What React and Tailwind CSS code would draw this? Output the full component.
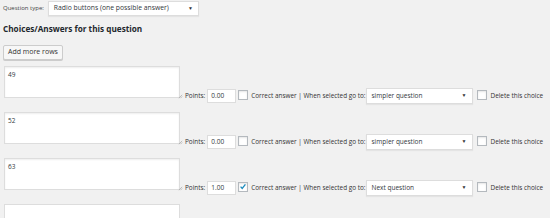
const choices = [
  { text: "49", points: "0.00", correct: false, goto: "simpler question" },
  { text: "52", points: "0.00", correct: false, goto: "simpler question" },
  { text: "63", points: "1.00", correct: true, goto: "Next question" },
];

function Check({ checked }) {
  return (
    <span className="inline-flex w-[10px] h-[10px] shrink-0 items-center justify-center bg-white border border-[#b4b9be] shadow-[inset_0_1px_2px_rgba(0,0,0,0.1)]">
      {checked && (
        <svg viewBox="0 0 10 10" className="w-[9px] h-[9px]">
          <path d="M2 5.2 L4 7.4 L8 2.4" fill="none" stroke="#1e8cbe" strokeWidth="1.7" />
        </svg>
      )}
    </span>
  );
}

function FakeSelect({ value, className }) {
  return (
    <div className={`flex items-center justify-between bg-white border border-[#ddd] shadow-[0_1px_1px_rgba(0,0,0,0.05)] text-[#32373c] ${className}`}>
      <span>{value}</span>
      <span className="text-[5px] text-[#333]">▼</span>
    </div>
  );
}

function ChoiceRow({ choice }) {
  return (
    <div className="flex items-end">
      <div className="relative mb-[6px]">
        <textarea
          readOnly
          defaultValue={choice.text}
          className="block w-[176px] h-[32px] resize-none bg-white border border-[#ddd] shadow-[inset_0_1px_2px_rgba(0,0,0,0.07)] px-[3px] py-[3px] text-[6.5px] leading-[9px] text-[#32373c] outline-none"
        />
        <svg viewBox="0 0 6 6" className="absolute right-[-3px] bottom-[-1px] w-[5px] h-[5px]">
          <path d="M1 5 L5 1 M3 5 L5 3" stroke="#999" strokeWidth="0.7" />
        </svg>
      </div>
      <div className="flex items-center h-[16px] text-[6.4px] text-[#333] whitespace-nowrap">
        <span className="ml-[5px]">Points:</span>
        <span className="ml-[2px] w-[29px] h-[14px] flex items-center bg-white border border-[#ddd] pl-[3px] text-[6.5px] text-[#32373c]">
          {choice.points}
        </span>
        <span className="ml-[2px]"><Check checked={choice.correct} /></span>
        <span className="ml-[3px]">Correct answer | When selected go to:</span>
        <FakeSelect value={choice.goto} className="ml-[0px] w-[107px] h-[16px] px-[5px] text-[6.5px]" />
        <span className="ml-[4px]"><Check checked={false} /></span>
        <span className="ml-[4px]">Delete this choice</span>
      </div>
    </div>
  );
}

export default function App() {
  return (
    <div className="w-[550px] h-[218px] overflow-hidden bg-[#f1f1f1] text-[#23282d]" style={{ fontFamily: '"Open Sans", sans-serif' }}>
      <div className="flex items-center pt-[1px] pl-[3px]">
        <span className="text-[6px] text-[#444]">Question type:</span>
        <FakeSelect value="Radio buttons (one possible answer)" className="ml-[4px] w-[151px] h-[15px] pl-[5px] pr-[5px] text-[6.8px]" />
      </div>
      <h3 className="mt-[7px] pl-[3px] text-[8.2px] font-bold leading-[12px]">Choices/Answers for this question</h3>
      <div className="pl-[3px] mt-[1px]">
        <button className="h-[15px] px-[4px] bg-[#f7f7f7] border border-[#ccc] rounded-[2px] shadow-[0_1px_0_#ccc] text-[7px] text-[#333]">
          Add more rows
        </button>
      </div>
      <div className="flex flex-col gap-[8px] mt-[6px] pl-[4px]">
        {choices.map((c, i) => (
          <ChoiceRow key={i} choice={c} />
        ))}
        <div className="w-[176px] h-[32px] bg-white border border-[#ddd]" />
      </div>
    </div>
  );
}
